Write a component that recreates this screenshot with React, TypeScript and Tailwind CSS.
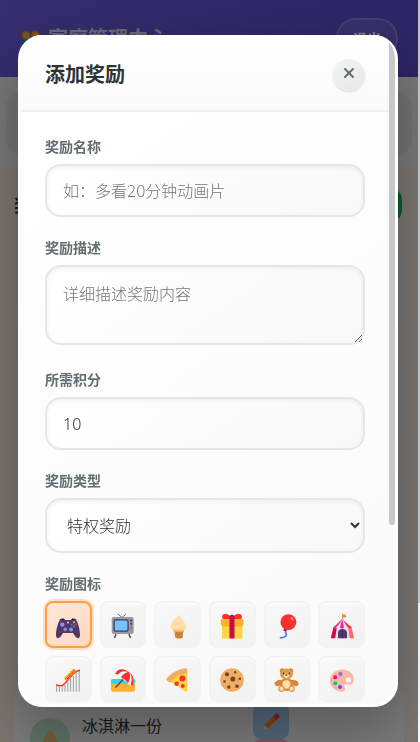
import { useState } from "react";
import type { ReactNode } from "react";
import { X } from "lucide-react";

const GamepadIcon = () => (
  <>
    <path
      d="M4 6c1-1 4-1 5 0h6c1-1 4-1 5 0 2 2 4 10 4 15 0 4-3 4-5 1l-2-3H7l-2 3c-2 3-5 3-5-1C0 16 2 8 4 6z"
      fill="#533566"
    />
    <path d="M3 6l3-1.5h2L9 6zM15 6l1-1.5h2L21 6z" fill="#321b41" />
    <circle cx="6.3" cy="10.6" r="2.2" fill="#8895e6" />
    <circle cx="15" cy="15.4" r="2" fill="#8895e6" />
    <path d="M8.5 13.6h1.6v1h1v1.6h-1v1H8.5v-1h-1v-1.6h1z" fill="#8895e6" />
    <circle cx="12" cy="8.4" r="1" fill="#d5e5e8" />
    <circle cx="18" cy="8.3" r="1" fill="#fcd53f" />
    <circle cx="20.2" cy="10.5" r="1" fill="#f92f60" />
    <circle cx="18" cy="12.6" r="1" fill="#00d26a" />
    <circle cx="15.8" cy="10.5" r="1" fill="#00a6ed" />
  </>
);

const TvIcon = () => (
  <>
    <path d="M7 0l4 3.5L15 0" fill="none" stroke="#636363" strokeWidth="1" />
    <path d="M5 20l-1.500 4M18 20l1.500 4" stroke="#4a4a4a" strokeWidth="1.5" />
    <rect x="0.7" y="3" width="22" height="17" rx="2" fill="#9b9b9b" />
    <rect x="2.5" y="5.2" width="15.2" height="12.6" rx="1.8" fill="#433b6b" />
    <rect x="3.8" y="6.5" width="12.6" height="10" rx="1" fill="#72c4ff" />
    <circle cx="20.2" cy="6.6" r="1.1" fill="#533566" />
    <circle cx="20.2" cy="9.8" r="1.1" fill="#ca0b4a" />
    <path d="M19 13h2.5M19 15h2.5" stroke="#6b6b6b" strokeWidth="0.8" />
  </>
);

const IceCreamIcon = () => (
  <>
    <path d="M8 15h9.500L16.500 24c0 .6-7 .6-7 0z" fill="#d3883e" />
    <path d="M7.500 15H18v3.200H7.800z" fill="#f3ad61" />
    <path d="M10 18l6 6M16 18l-6 6M8.500 21l3-3M17 21l-3-3" stroke="#b97028" strokeWidth="0.6" />
    <path
      d="M12.500.6c.8 2 3.500 3.200 3.500 5 2.500.6 2.700 3 2.200 4 3 .8 3.300 5.400 0 6.200-2 .8-9.600.8-11.500 0-3.400-1-2.900-5.400 0-6.200-.8-2 .3-3.700 2.200-4.200C9 3.700 12.500 3 12.500.6z"
      fill="#ffdea7"
    />
    <path d="M7 10c3 1 6 .4 9-1.500M6 15.500c4 .6 8 0 12-1.700" stroke="#f8d092" strokeWidth="0.7" fill="none" />
  </>
);

const GiftIcon = () => (
  <>
    <path d="M12 5C9 6 2 6 2 3s4-4 6-2.500l4 2.500zM12 5c3 1 10 1 10-2s-4-4-6-2.500L12 3z" fill="#f8312f" />
    <rect x="2" y="10" width="20.5" height="14.5" rx="1.2" fill="#fcd53f" />
    <rect x="0.7" y="5" width="22.8" height="6.3" rx="1.2" fill="#ffb02e" />
    <path d="M2 11.300h20.500v1H2z" fill="#f4a71b" />
    <path d="M9.500 2.500C10 0 14 0 14.500 2.500v22h-5z" fill="#ca0b4a" />
  </>
);

const BalloonIcon = () => (
  <>
    <path
      d="M10 17.500c1.500 1.600 2 3 .8 4.500-1.400 1.700-3.500 1.200-6 2.200"
      fill="none"
      stroke="#4a6cf7"
      strokeWidth="1.4"
    />
    <circle cx="13.4" cy="8.2" r="7.9" fill="#f8312f" />
    <path d="M9.500 14.500l2.500 1.200-.6 2L8 16.400z" fill="#ca0b4a" />
    <ellipse cx="17" cy="4.7" rx="1.2" ry="1.8" transform="rotate(-35 17 4.7)" fill="#ff8b85" />
  </>
);

const TentIcon = () => (
  <>
    <path d="M12 0h.9v6H12z" fill="#d3883e" />
    <path d="M12.800.2l3 .6v2.400l-3 .3z" fill="#ff822d" />
    <path d="M3.500 13h17.800L24 24.300H1z" fill="#e6daee" />
    <path d="M3.500 13h3.300L5.200 24.300H.8z" fill="#ca0b4a" />
    <path d="M18.200 13h3.200L24 24.300h-4.300z" fill="#ff6b64" />
    <path
      d="M12.400 4.500c2 3.300 5.400 6 9.600 8.700-1.300 1.600-3 1.600-4 .3-1.400 1.600-3 1.600-4 0-1.300 1.500-3 1.500-4 0-1 1.500-2.700 1.500-4 0-1 1.300-2.200 1.200-3-.3 4.200-2.700 7.400-5.400 9.400-8.700z"
      fill="#e6daee"
    />
    <path d="M12.200 4.500C9.500 8 6 11 3 13.200c.7 1.500 2 1.600 3 .3C8.600 11 11 8 12.200 4.500z" fill="#e8308d" />
    <path d="M12.300 5c-1 3.500-1.700 6-2.300 8.500 1 1.500 2.700 1.500 4 0z" fill="#d72fa1" />
    <path d="M12.600 4.500c1.500 3.500 3.300 6.500 5.400 9 1 1.300 2.700 1.300 4-.3-4-2.600-7.400-5.400-9.400-8.700z" fill="#f8312f" />
    <path d="M8 24.300V19c0-5.200 9-5.200 9 0v5.300z" fill="#533566" />
    <path d="M12.500 15.500v8.800" stroke="#402a50" strokeWidth="0.6" />
  </>
);

const CoasterIcon = () => (
  <>
    <path
      d="M.6 18v5.700M3.400 18v5.700M6.200 18v5.700M9 17v6.700M11.800 14v9.700M14.600 11v12.700M17.400 8v15.700M20.200 5v18.700M23.200 3v20.700"
      stroke="#9b9b9b"
      strokeWidth="1"
    />
    <path d="M0 16.800c7 3 9-1.500 13-6 3.500-4 6-8 11-8.500" fill="none" stroke="#f8312f" strokeWidth="1.5" />
    <path d="M9.500 12l9.500-10" stroke="#ff822d" strokeWidth="3.4" />
    <path d="M8.600 10l9-9.300" stroke="#fcb02e" strokeWidth="1.4" strokeDasharray="1.6 1" />
    <path d="M11 11l8-8.600" stroke="#6d4534" strokeWidth="0.9" strokeDasharray="2 1.5" />
  </>
);

const BeachIcon = () => (
  <>
    <path d="M0 18v-5.500a1.500 1.500 0 0 1 1.500-1.500h21a1.500 1.500 0 0 1 1.500 1.500V18z" fill="#26d9ee" />
    <path d="M0 15.500c4 .6 8-.5 12 0s8 .3 12 0v6.300a2 2 0 0 1-2 2H2a2 2 0 0 1-2-2z" fill="#ffb02e" />
    <path d="M14 9.500L4.500 19.500" stroke="#6d4534" strokeWidth="1.4" />
    <path d="M4 6C7 0 14 0 18 4c5 3.500 6 10 3 15L11 10.500z" fill="#f6f2f6" />
    <path d="M4 6C6 1 12-.5 18 4c-5-1.500-9-.8-11 2.800C6 6 5 5.700 4 6z" fill="#f8312f" />
    <path d="M18 4c-3.500 0-6.500 2.500-8 5.500 2.500 1.200 5 3 7 5.700C19 12 20 7 18 4z" fill="#f8312f" />
    <path d="M18 4c5 3.500 6 10 3 15-.2-1.300-.7-2-1.400-2.700C21.500 12 21 7.500 18 4z" fill="#f8312f" />
  </>
);

const PizzaIcon = () => (
  <>
    <path d="M3.500 13C8 8 14 5 21.300 4v18.500c0 1.400-1 1.800-2.200 1.100z" fill="#fcd53f" />
    <path
      d="M19.500.3c1.200-.2 1.800.4 1.800 1.500V5C14 6.300 9 9 5.300 13.700c-.8 1-1.700 1-2.600.3L.8 12.500c-.7-.6-.8-1.300-.2-2C5 5 12 1.200 19.500.3z"
      fill="#f3ad61"
    />
    <circle cx="16.4" cy="10.6" r="3" fill="#f8312f" />
    <circle cx="10.6" cy="15.8" r="2.2" fill="#f8312f" />
    <circle cx="16.8" cy="18" r="1.9" fill="#f8312f" />
  </>
);

const CookieIcon = () => (
  <>
    <circle cx="12" cy="12" r="11.8" fill="#f3ad61" />
    <g fill="#6d4534">
      <circle cx="12.8" cy="11" r="2.5" />
      <circle cx="7" cy="6.3" r="2.1" />
      <circle cx="15.2" cy="4.2" r="1.2" />
      <circle cx="19.8" cy="10.7" r="1.3" />
      <circle cx="17" cy="18.2" r="1.8" />
      <circle cx="8.8" cy="19" r="1.7" />
      <circle cx="4.5" cy="13.5" r="1.3" />
    </g>
  </>
);

const BearIcon = () => (
  <>
    <circle cx="7.3" cy="2.7" r="2.5" fill="#d3883e" />
    <circle cx="15.7" cy="2.7" r="2.5" fill="#d3883e" />
    <ellipse cx="3.5" cy="15" rx="4" ry="2.7" transform="rotate(-25 3.5 15)" fill="#d3883e" />
    <ellipse cx="19.7" cy="15" rx="4" ry="2.7" transform="rotate(25 19.7 15)" fill="#d3883e" />
    <ellipse cx="11.5" cy="16.5" rx="7" ry="6.5" fill="#d3883e" />
    <ellipse cx="11.5" cy="6" rx="6.5" ry="5.4" fill="#e09a4e" />
    <ellipse cx="11.5" cy="16.5" rx="4" ry="4.2" fill="#ffdea7" />
    <ellipse cx="11.5" cy="7.7" rx="2.6" ry="2.2" fill="#ffdea7" />
    <circle cx="8.7" cy="5.4" r="0.8" fill="#402a32" />
    <circle cx="14.3" cy="5.4" r="0.8" fill="#402a32" />
    <ellipse cx="11.5" cy="7" rx="1" ry="0.7" fill="#402a32" />
    <circle cx="6.5" cy="20.8" r="3.2" fill="#e09a4e" />
    <circle cx="16.7" cy="20.8" r="3.2" fill="#e09a4e" />
    <circle cx="6.5" cy="20.8" r="2" fill="#ffdea7" />
    <circle cx="16.7" cy="20.8" r="2" fill="#ffdea7" />
  </>
);

const PaletteIcon = () => (
  <>
    <path
      fillRule="evenodd"
      d="M12 1.500c7 0 12 4.500 11.800 10 0 4-3 6.200-6.500 5-2.600-.8-4 .6-2.700 2.700 1.300 2.300.4 4.500-2.600 4.500C5 23.700 0 18.500 0 12.500S5 1.500 12 1.500zM18.500 9.300a2.600 2.600 0 1 0 0 5.200 2.600 2.600 0 0 0 0-5.200z"
      fill="#ffb5a7"
    />
    <circle cx="10.4" cy="6" r="2" fill="#9068d0" />
    <circle cx="5.2" cy="9.3" r="2" fill="#f70a8d" />
    <circle cx="5.2" cy="15.3" r="2" fill="#00d26a" />
    <circle cx="10" cy="19" r="2" fill="#3f5fff" />
  </>
);

const rewardIcons: { name: string; viewBox: string; art: ReactNode }[] = [
  { name: "游戏", viewBox: "-4 -6 32 32", art: <GamepadIcon /> },
  { name: "电视", viewBox: "-4 -6 32 32", art: <TvIcon /> },
  { name: "冰淇淋", viewBox: "-4 -6 32 32", art: <IceCreamIcon /> },
  { name: "礼物", viewBox: "-4 -6 32 32", art: <GiftIcon /> },
  { name: "气球", viewBox: "-4 -6 32 32", art: <BalloonIcon /> },
  { name: "马戏团", viewBox: "-4 -6 32 32", art: <TentIcon /> },
  { name: "过山车", viewBox: "-4 -5 32 32", art: <CoasterIcon /> },
  { name: "海滩", viewBox: "-4 -5 32 32", art: <BeachIcon /> },
  { name: "披萨", viewBox: "-4 -5 32 32", art: <PizzaIcon /> },
  { name: "饼干", viewBox: "-4 -5 32 32", art: <CookieIcon /> },
  { name: "玩具熊", viewBox: "-4 -5 32 32", art: <BearIcon /> },
  { name: "画画", viewBox: "-4 -5 32 32", art: <PaletteIcon /> },
];

const labelClass = "mb-[6px] block text-sm leading-[22px] font-semibold text-[#636e72]";
const fieldClass =
  "block w-full rounded-[16px] border-2 border-[#e6e6e6] bg-linear-145 from-white to-[#f8f8f8] px-4 text-base font-light text-[#2d3436] placeholder-[#757575] shadow-[inset_0_2px_4px_rgba(0,0,0,0.05)] outline-none";

function Dashboard() {
  return (
    <div className="flex h-screen overflow-hidden" aria-hidden="true">
      <div className="flex min-w-0 flex-1 flex-col bg-[#f6ebe1]">
        <header className="flex h-[77px] shrink-0 items-center justify-between bg-linear-to-r from-[#6c5ce0] to-[#5b4bce] pr-5 pl-[21px]">
          <div className="flex items-center gap-[7px]">
            <svg width="20" height="20" viewBox="0 0 20 20">
              <circle cx="5" cy="6" r="4.5" fill="#d3883e" />
              <circle cx="14.5" cy="6" r="4.5" fill="#d3883e" />
              <circle cx="5" cy="6.5" r="3.2" fill="#ffb02e" />
              <circle cx="14.5" cy="6.5" r="3.2" fill="#ffb02e" />
              <path d="M0 20v-6c1-4 9-4 10 0v6z" fill="#00a6a6" />
              <path d="M10 20v-6c1-4 8-4 9 0v6z" fill="#ff822d" />
            </svg>
            <h1 className="text-xl font-bold text-[#d8d2e4]">家庭管理中心</h1>
          </div>
          <button className="h-[41px] w-[62px] rounded-[20px] border-2 border-white/20 bg-white/10 text-sm font-semibold text-white">
            退出
          </button>
        </header>
        <div className="h-[91px] shrink-0 bg-[#f2f2f2] px-[6px] pt-[14px]">
          <div className="h-[64px] rounded-[16px] bg-[#e6e6e6]" />
        </div>
        <div className="flex shrink-0 items-center justify-between pt-5 pr-4 pl-[14px]">
          <h2 className="text-lg leading-6 font-bold text-[#2d3436]">奖励管理</h2>
          <button
            aria-label="添加"
            className="h-[34px] w-[96px] rounded-[12px] bg-[#10b860]"
          />
        </div>
        <div className="flex flex-col gap-[14px] px-[14px] pt-[22px]">
          <div className="h-[96px] rounded-[16px] bg-[#eeeeee]" />
          <div className="h-[96px] rounded-[16px] bg-[#eeeeee]" />
          <div className="h-[96px] rounded-[16px] bg-[#eeeeee]" />
          <div className="h-[96px] rounded-[16px] bg-[#eeeeee]" />
          <div className="flex h-[96px] items-start gap-3 rounded-t-[16px] bg-[#f4f4f4] px-4 pt-[20px]">
            <div className="mt-[14px] flex size-[40px] shrink-0 justify-center rounded-full bg-[#bfe0c8] pt-3">
              <svg width="24" height="24" viewBox="0 0 24 24">
                <path d="M12 0l6 8 2 8H4l2-8z" fill="#e8b878" />
              </svg>
            </div>
            <p className="mt-[10px] flex-1 text-base leading-6 text-[#2d3436]">冰淇淋一份</p>
            <div className="mr-[99px] flex flex-col">
              <button
                aria-label="编辑"
                className="flex h-[35px] w-9 items-center justify-center rounded-[8px] bg-[#a5cdf0]"
              >
                <svg width="18" height="18" viewBox="0 0 18 18">
                  <path d="M1 17l1.500-5L6 15.500z" fill="#ffdea7" />
                  <path d="M2.500 12L11 3.500 14.500 7 6 15.500z" fill="#ff822d" />
                  <path d="M11 3.500L14 .7c1.500-.7 4 1.500 3.300 3.300L14.500 7z" fill="#f92f60" />
                </svg>
              </button>
              <button aria-label="删除" className="h-[35px] w-9 rounded-[8px] bg-[#f2b5b5]" />
            </div>
          </div>
        </div>
      </div>
      <div className="w-[2px] shrink-0 bg-white" />
    </div>
  );
}

export default function App() {
  const [selected, setSelected] = useState(0);
  const [points, setPoints] = useState("10");

  return (
    <div className="h-screen overflow-hidden font-['Noto_Sans','Noto_Sans_CJK_SC',sans-serif]">
      <Dashboard />
      <div className="fixed inset-y-0 right-[2px] left-0 flex items-center justify-center bg-black/50 pr-5 pl-[18px]">
        <div
          role="dialog"
          aria-modal="true"
          aria-labelledby="dialog-title"
          className="flex max-h-[calc(100vh-70px)] w-full overflow-hidden rounded-[24px] border-3 border-t-0 border-white bg-linear-145 from-white to-[#fafafa] shadow-[0_20px_60px_rgba(0,0,0,0.3)]"
        >
          <div className="min-w-0 flex-1 overflow-y-auto [scrollbar-width:none]">
            <div className="flex items-center justify-between border-b-2 border-[#eeeeee] bg-linear-to-b from-white to-[#fafafa] px-6 pt-6 pb-[19px]">
              <h2 id="dialog-title" className="text-xl leading-8 font-semibold text-[#2d3436]">
                添加奖励
              </h2>
              <button
                type="button"
                aria-label="关闭"
                className="flex size-8 items-start justify-center rounded-full bg-linear-145 from-[#f3f3f3] to-[#e8e8e8] pt-[6px] text-[#636e72] shadow-[0_1px_2px_rgba(0,0,0,0.15)]"
              >
                <X size={16} strokeWidth={3} />
              </button>
            </div>

            <form className="flex flex-col gap-5 px-6 pt-6 pb-[240px]">
              <div>
                <label htmlFor="name" className={labelClass}>
                  奖励名称
                </label>
                <input
                  id="name"
                  type="text"
                  placeholder="如：多看20分钟动画片"
                  className={`${fieldClass} h-[53px]`}
                />
              </div>
              <div>
                <label htmlFor="description" className={labelClass}>
                  奖励描述
                </label>
                <textarea
                  id="description"
                  placeholder="详细描述奖励内容"
                  className={`${fieldClass} mb-1 h-[80px] resize-y py-[15px] leading-6`}
                />
              </div>
              <div>
                <label htmlFor="points" className={labelClass}>
                  所需积分
                </label>
                <input
                  id="points"
                  type="number"
                  value={points}
                  onChange={(e) => setPoints(e.target.value)}
                  className={`${fieldClass} h-[53px]`}
                />
              </div>
              <div>
                <label htmlFor="type" className={labelClass}>
                  奖励类型
                </label>
                <select id="type" className={`${fieldClass} h-[55px]`}>
                  <option>特权奖励</option>
                </select>
              </div>
              <div>
                <span id="icon-label" className={labelClass}>
                  奖励图标
                </span>
                <div role="group" aria-labelledby="icon-label" className="grid grid-cols-6 gap-2">
                  {rewardIcons.map((icon, i) => (
                    <button
                      key={icon.name}
                      type="button"
                      aria-label={icon.name}
                      aria-pressed={selected === i}
                      onClick={() => setSelected(i)}
                      className={`flex aspect-square items-center justify-center rounded-[8px] border-2 ${
                        selected === i
                          ? "border-[#ff9f43] bg-linear-145 from-[#ffe8d8] to-[#ffd8be] shadow-[0_0_0_2px_rgba(255,159,67,0.3)]"
                          : "border-[#f3f3f3] bg-linear-145 from-[#f9f9f9] to-[#f1f1f1] shadow-[inset_0_1px_1px_#ffffff]"
                      }`}
                    >
                      <svg width="32" height="32" viewBox={icon.viewBox} className="shrink-0">
                        {icon.art}
                      </svg>
                    </button>
                  ))}
                </div>
              </div>
            </form>
          </div>
          <div className="w-[6px] shrink-0">
            <div className="h-[490px] rounded-b-[3px] bg-[#c8c8c8]" />
          </div>
        </div>
      </div>
      <div className="fixed top-0 right-0 h-[603px] w-[2px] bg-[#c4c4c4]" />
    </div>
  );
}
